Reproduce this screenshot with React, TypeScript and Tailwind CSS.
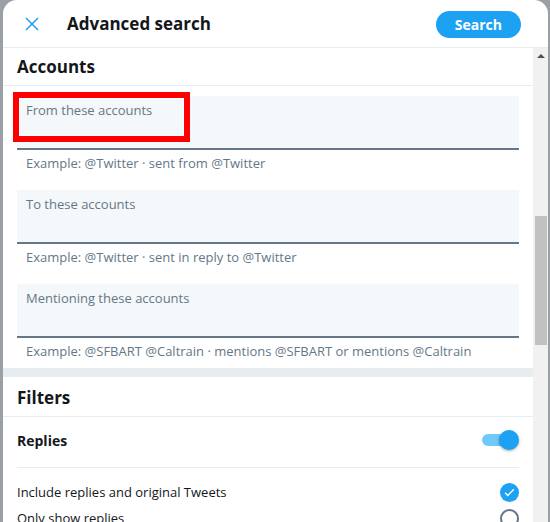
import React from "react";

const fields = [
  { label: "From these accounts", hint: "Example: @Twitter · sent from @Twitter", marked: true },
  { label: "To these accounts", hint: "Example: @Twitter · sent in reply to @Twitter" },
  { label: "Mentioning these accounts", hint: "Example: @SFBART @Caltrain · mentions @SFBART or mentions @Caltrain" },
];

function Field({ label, hint, marked }: { label: string; hint: string; marked?: boolean }) {
  return (
    <div className="px-[14px] pt-[10px]">
      <div className="relative h-[54px] bg-[#f5f8fa] border-b-2 border-[#657786]">
        <span className="absolute left-[9px] top-[4px] text-[13px] leading-[20px] text-[#657786]">{label}</span>
        {marked && (
          <div className="absolute left-[-4px] top-[-4px] w-[177px] h-[50px] border-[6px] border-[#ff0000] shadow-[inset_0_0_0_1px_#ffffff]" />
        )}
      </div>
      <p className="pl-[9px] pt-[3px] pb-[7px] text-[13px] leading-[20px] text-[#657786]">{hint}</p>
    </div>
  );
}

export default function App() {
  return (
    <div className="w-[550px] h-[522px] bg-[#9aa0a5] overflow-hidden font-['Segoe_UI','Open_Sans',sans-serif] text-[#14171a]">
      <div className="ml-[3px] w-[545px] h-[522px] bg-white rounded-t-[14px] flex flex-col">
        <header className="h-[48px] shrink-0 flex items-center border-b border-[#e6ecf0] pl-[21px] pr-[27px] pt-[1px]">
          <svg viewBox="0 0 24 24" className="w-[16px] h-[16px] text-[#1da1f2]" fill="none" stroke="currentColor" strokeWidth="2.2">
            <path d="M3 3l18 18M21 3L3 21" />
          </svg>
          <h1 className="ml-[27px] text-[17px] font-bold">Advanced search</h1>
          <button className="ml-auto h-[27px] px-[19px] rounded-full bg-[#1da1f2] text-white text-[14px] font-bold">
            Search
          </button>
        </header>
        <div className="flex flex-1 min-h-0">
          <main className="flex-1 overflow-hidden">
            <h2 className="h-[38px] flex items-center pl-[14px] text-[17px] font-bold border-b border-[#e6ecf0]">Accounts</h2>
            {fields.map((f) => (
              <Field key={f.label} {...f} />
            ))}
            <div className="h-[9px] bg-[#e6ecf0]" />
            <h2 className="h-[40px] flex items-center pl-[14px] pt-[2px] text-[17px] font-bold border-b border-[#e6ecf0]">Filters</h2>
            <div className="mx-[14px] h-[51px] pb-[4px] flex items-center justify-between border-b border-[#e6ecf0]">
              <span className="text-[14px] font-bold">Replies</span>
              <div className="relative w-[37px] h-[20px] flex items-center">
                <div className="w-[32px] h-[12px] rounded-full bg-[#71c9f8]" />
                <div className="absolute right-0 top-0 w-[20px] h-[20px] rounded-full bg-[#1da1f2] shadow-[0_1px_3px_rgba(0,0,0,0.35)]" />
              </div>
            </div>
            <div className="mx-[14px] pt-[14px] flex items-center justify-between">
              <span className="text-[13px] leading-[20px]">Include replies and original Tweets</span>
              <div className="w-[19px] h-[19px] rounded-full bg-[#1da1f2] flex items-center justify-center">
                <svg viewBox="0 0 24 24" className="w-[13px] h-[13px]" fill="none" stroke="white" strokeWidth="2.5">
                  <path d="M4 12.5l5 5L20 6" />
                </svg>
              </div>
            </div>
            <div className="mx-[14px] pt-[6px] flex items-center justify-between">
              <span className="text-[13px] leading-[20px]">Only show replies</span>
              <div className="w-[19px] h-[19px] rounded-full border-2 border-[#657786]" />
            </div>
          </main>
          <div className="w-[15px] shrink-0 bg-[#f1f1f1] flex flex-col items-center">
            <div className="h-[16px] flex items-center justify-center">
              <div className="w-0 h-0 border-l-[4px] border-r-[4px] border-b-[4px] border-l-transparent border-r-transparent border-b-[#505050]" />
            </div>
            <div className="mt-[152px] w-[12px] h-[129px] bg-[#c1c1c1]" />
          </div>
        </div>
      </div>
    </div>
  );
}
